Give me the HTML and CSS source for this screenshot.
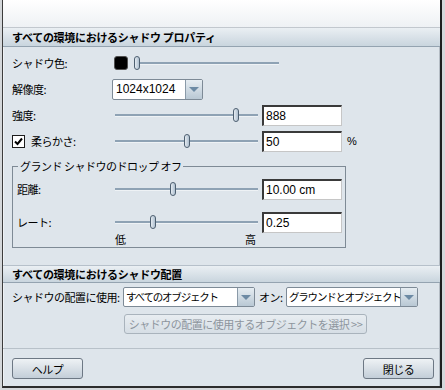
FILE: index.html
```html
<!DOCTYPE html>
<html lang="ja">
<head>
  <meta charset="UTF-8">
  <meta name="viewport" content="width=device-width, initial-scale=1.0">
  <title>シャドウ プロパティ</title>
  <link rel="stylesheet" href="styles.css">
</head>
<body>
  <div class="window">
    <div class="titlebar"></div>

    <!-- Propriedades -->
    <h2 class="section-head">すべての環境におけるシャドウ プロパティ</h2>
    <section class="props">
      <div class="row">
        <span class="label">シャドウ色:</span>
        <span class="swatch"></span>
        <div class="slider slider-color" style="--v: 0"><span class="thumb"></span></div>
      </div>
      <div class="row">
        <span class="label">解像度:</span>
        <div class="select select-res">
          <span class="select-text">1024x1024</span>
          <span class="select-arrow"></span>
        </div>
      </div>
      <div class="row">
        <span class="label">強度:</span>
        <div class="slider" style="--v: 0.86"><span class="thumb"></span></div>
        <input class="field" value="888">
      </div>
      <div class="row">
        <label class="label check-label">
          <span class="checkbox">
            <svg width="9" height="9" viewBox="0 0 9 9"><path d="M1 4.5 L3.5 7 L8 1.5" fill="none" stroke="#000" stroke-width="2"/></svg>
          </span>
          柔らかさ:
        </label>
        <div class="slider" style="--v: 0.5"><span class="thumb"></span></div>
        <input class="field" value="50">
        <span class="unit">%</span>
      </div>

      <fieldset class="group">
        <legend>グランド シャドウのドロップ オフ</legend>
        <div class="row group-row">
          <span class="label label-inner">距離:</span>
          <div class="slider slider-inner" style="--v: 0.4"><span class="thumb"></span></div>
          <input class="field" value="10.00 cm">
        </div>
        <div class="row group-row second">
          <span class="label label-inner">レート:</span>
          <div class="slider slider-inner" style="--v: 0.255"><span class="thumb"></span></div>
          <input class="field" value="0.25">
        </div>
        <div class="scale"><span>低</span><span>高</span></div>
      </fieldset>
    </section>

    <!-- Posicionamento -->
    <h2 class="section-head section-head-2">すべての環境におけるシャドウ配置</h2>
    <section class="placement">
      <div class="row row-place">
        <span class="place-label">シャドウの配置に使用:</span>
        <div class="select select-obj">
          <span class="select-text">すべてのオブジェクト</span>
          <span class="select-arrow"></span>
        </div>
        <span class="on-label">オン:</span>
        <div class="select select-obj">
          <span class="select-text">グラウンドとオブジェクト</span>
          <span class="select-arrow"></span>
        </div>
      </div>
      <button class="btn btn-wide" disabled>シャドウの配置に使用するオブジェクトを選択 &gt;&gt;</button>
    </section>

    <footer class="actions">
      <button class="btn">ヘルプ</button>
      <button class="btn">閉じる</button>
    </footer>
  </div>
</body>
</html>
```

FILE: styles.css
```css
/* Estilos Globais */
body {
  margin: 0;
  background-color: #d4d7da;
  font-family: "Noto Sans CJK JP", sans-serif;
  font-size: 11px;
  color: #000;
}

.window {
  height: 386px;
  margin: 0 3px 2px 2px;
  background-color: #dee5eb;
  border-left: 1px solid #3c3c3c;
  border-right: 2px solid #1e1e1e;
  border-bottom: 2px solid #2c2c2c;
  box-shadow: inset 1px 0 0 #eef1f4, inset -1px 0 0 #b4bcc4;
}

.titlebar {
  height: 27px;
  background: linear-gradient(#ffffff, #eef1f4);
  border-bottom: 1px solid #c2c8ce;
}

/* Cabeçalhos das seções */
.section-head {
  margin: 0;
  height: 18px;
  line-height: 18px;
  padding-left: 9px;
  font-size: 11px;
  font-weight: bold;
  letter-spacing: -0.3px;
  background: linear-gradient(#eaeff3, #c9d5de);
  border-bottom: 1px solid #94a3b0;
}

.section-head-2 {
  margin-top: 17px;
  height: 16px;
  line-height: 16px;
  border-top: 1px solid #b6c0ca;
}

/* Linhas */
.props {
  padding: 3px 0 0 9px;
}

.row {
  display: flex;
  align-items: center;
  height: 26px;
}

.label {
  width: 100px;
  flex: none;
  letter-spacing: -0.5px;
}

.check-label {
  display: flex;
  align-items: center;
}

.checkbox {
  width: 11px;
  height: 11px;
  margin-right: 6px;
  display: flex;
  align-items: center;
  justify-content: center;
  background-color: #fff;
  border: 1px solid #1c1c1c;
}

.swatch {
  width: 12px;
  height: 12px;
  margin-left: 2px;
  background-color: #000;
  border: 1px solid #505050;
  border-radius: 3px;
}

/* Sliders */
.slider {
  position: relative;
  width: 143px;
  height: 14px;
  margin-left: 3px;
}

.slider::before {
  content: "";
  position: absolute;
  left: 0;
  right: 0;
  top: 6px;
  height: 2px;
  background-color: #8ea2b4;
  border-bottom: 1px solid #eef2f5;
}

.slider-color {
  width: 145px;
  margin-left: 6px;
}

.slider-inner {
  margin-left: 0;
}

.thumb {
  position: absolute;
  top: 0;
  left: calc((100% - 6px) * var(--v));
  width: 4px;
  height: 12px;
  background: linear-gradient(90deg, #e4ebf1, #aebfcf);
  border: 1px solid #4d5f70;
  border-radius: 3px;
}

/* Campos */
.field {
  box-sizing: border-box;
  width: 80px;
  height: 21px;
  margin: 0 0 0 4px;
  padding: 1px 2px 0;
  font-family: "Liberation Sans", sans-serif;
  font-size: 12px;
  background-color: #fff;
  border-top: 2px solid #3a3a3a;
  border-left: 2px solid #3a3a3a;
  border-right: 1px solid #c6c6c6;
  border-bottom: 1px solid #c6c6c6;
  outline: none;
}

.unit {
  margin-left: 5px;
  font-family: "Liberation Sans", sans-serif;
  font-size: 11px;
}

/* Select */
.select {
  box-sizing: border-box;
  display: flex;
  height: 21px;
  background-color: #fff;
  border: 1px solid #7d8a96;
  border-radius: 2px;
}

.select-res {
  width: 91px;
}

.select-text {
  flex: 1;
  padding-left: 3px;
  line-height: 19px;
  font-family: "Liberation Sans", sans-serif;
  font-size: 12px;
  white-space: nowrap;
  overflow: hidden;
}

.select-obj .select-text {
  padding-left: 2px;
  font-family: "Noto Sans CJK JP", sans-serif;
  font-size: 10.5px;
  letter-spacing: -1.2px;
}

.select-arrow {
  width: 16px;
  flex: none;
  display: flex;
  align-items: center;
  justify-content: center;
  background: linear-gradient(#e6edf2, #b9c8d4);
  border-left: 1px solid #8a9aa8;
}

.select-arrow::after {
  content: "";
  border-left: 5px solid transparent;
  border-right: 5px solid transparent;
  border-top: 5px solid #6c8aa4;
}

/* Grupo */
.group {
  box-sizing: border-box;
  width: 334px;
  margin: 5px 0 0;
  padding: 0 0 2px 4px;
  border: 1px solid #7e8a95;
  min-inline-size: 0;
}

.group legend {
  margin-left: 1px;
  padding: 0 2px;
  line-height: 14px;
  letter-spacing: -0.5px;
}

.group-row {
  height: 22px;
  margin-top: 5px;
}

.group-row.second {
  margin-top: 11px;
}

.label-inner {
  width: 98px;
}

.scale {
  display: flex;
  justify-content: space-between;
  width: 141px;
  margin-left: 98px;
  height: 12px;
  line-height: 12px;
}

/* Posicionamento */
.placement {
  padding: 4px 0 0 9px;
}

.row-place {
  height: 20px;
}

.place-label {
  width: 111px;
  flex: none;
  letter-spacing: -0.5px;
}

.select-obj {
  width: 132px;
  height: 20px;
}

.select-obj .select-text {
  line-height: 18px;
}

.on-label {
  width: 27px;
  margin-left: 4px;
  letter-spacing: -0.5px;
}

/* Botões */
.btn {
  box-sizing: border-box;
  width: 71px;
  height: 21px;
  padding: 0;
  font-family: "Noto Sans CJK JP", sans-serif;
  font-size: 11px;
  letter-spacing: -0.5px;
  color: #000;
  background: linear-gradient(#eef2f5, #c3ced8);
  border: 1px solid #6d7884;
  border-radius: 3px;
}

.btn-wide {
  display: block;
  width: 243px;
  height: 20px;
  margin: 7px 0 0 112px;
  color: #8d959d;
  background: linear-gradient(#e8edf1, #d6dee5);
  border-color: #a9b3bc;
}

.actions {
  display: flex;
  justify-content: space-between;
  margin-top: 14px;
  padding: 9px 6px 0 9px;
  border-top: 1px solid #b8c1c9;
}
```
